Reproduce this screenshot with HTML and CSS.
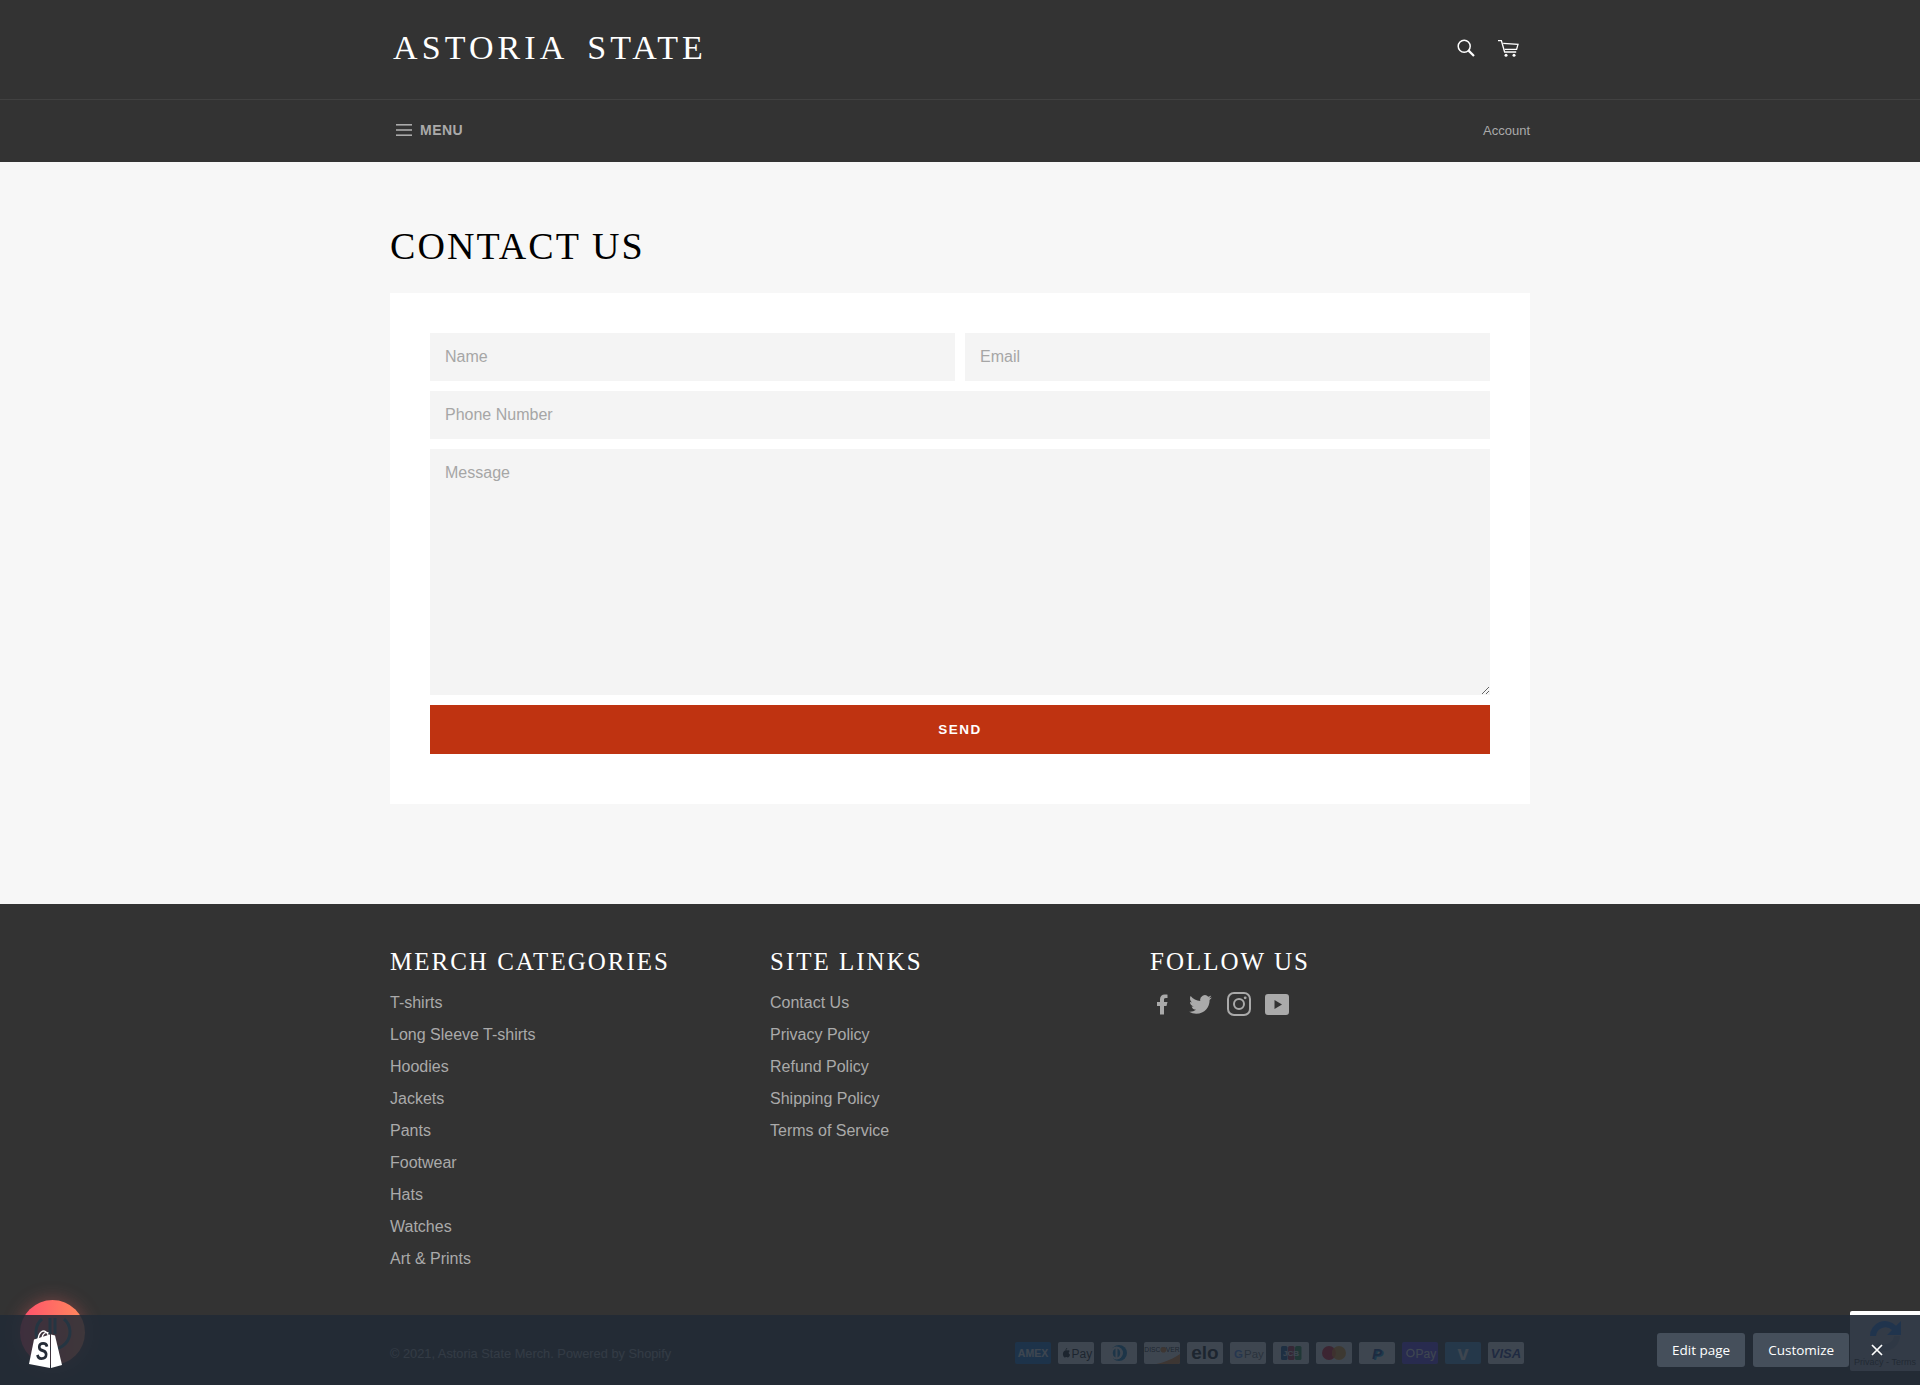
FILE: index.html
```html
<!DOCTYPE html>
<html lang="en">
<head>
  <meta charset="UTF-8">
  <meta name="viewport" content="width=device-width, initial-scale=1.0">
  <title>Contact Us - Astoria State Merch</title>
  <link rel="stylesheet" href="styles.css">
</head>
<body>

  <header class="site-header">
    <div class="masthead">
      <div class="wrap masthead-row">
        <a class="logo" href="#">ASTORIA STATE</a>
        <div class="header-icons">
          <a href="#" aria-label="Search">
            <svg class="icon-search" viewBox="0 0 18 18" fill="none" stroke="#fff"><circle cx="7.2" cy="7.2" r="6" stroke-width="1.5"/><path d="M11.6 11.6 17 17" stroke-width="2.2"/></svg>
          </a>
          <a href="#" aria-label="Cart">
            <svg class="icon-cart" viewBox="0 0 21 17" fill="none" stroke="#fff" stroke-width="1.3"><path d="M0 .7h3.4L6.6 12h11.6"/><path d="M5.2 3.4 20 4.4l-1.4 5H6.6"/><circle cx="8" cy="15.2" r="1.5" fill="#fff" stroke="none"/><circle cx="16" cy="15.2" r="1.5" fill="#fff" stroke="none"/></svg>
          </a>
        </div>
      </div>
    </div>
    <div class="wrap nav-row">
      <a class="menu-link" href="#">
        <svg class="icon-menu" viewBox="0 0 16 12" fill="#aaa"><rect width="16" height="1.6"/><rect y="5.2" width="16" height="1.6"/><rect y="10.4" width="16" height="1.6"/></svg>
        MENU
      </a>
      <a class="account-link" href="#">Account</a>
    </div>
  </header>

  <main class="wrap page-main">
    <h1 class="page-title">CONTACT US</h1>
    <form class="contact-card">
      <div class="field-row">
        <input type="text" placeholder="Name">
        <input type="email" placeholder="Email">
      </div>
      <input type="tel" placeholder="Phone Number">
      <textarea placeholder="Message"></textarea>
      <button type="button">SEND</button>
    </form>
  </main>

  <footer class="site-footer">
    <div class="wrap footer-cols">
      <div>
        <h4>MERCH CATEGORIES</h4>
        <ul>
          <li><a href="#">T-shirts</a></li>
          <li><a href="#">Long Sleeve T-shirts</a></li>
          <li><a href="#">Hoodies</a></li>
          <li><a href="#">Jackets</a></li>
          <li><a href="#">Pants</a></li>
          <li><a href="#">Footwear</a></li>
          <li><a href="#">Hats</a></li>
          <li><a href="#">Watches</a></li>
          <li><a href="#">Art &amp; Prints</a></li>
        </ul>
      </div>
      <div>
        <h4>SITE LINKS</h4>
        <ul>
          <li><a href="#">Contact Us</a></li>
          <li><a href="#">Privacy Policy</a></li>
          <li><a href="#">Refund Policy</a></li>
          <li><a href="#">Shipping Policy</a></li>
          <li><a href="#">Terms of Service</a></li>
        </ul>
      </div>
      <div>
        <h4>FOLLOW US</h4>
        <div class="social">
          <svg class="soc-f" viewBox="7 2 11 20" fill="#aaa"><path d="M14 13.5h2.5l1-4H14v-2c0-1.03 0-2 2-2h1.5V2.14c-.326-.043-1.557-.14-2.857-.14C11.928 2 10 3.657 10 6.7v2.8H7v4h3V22h4v-8.5z"/></svg>
          <svg class="soc-t" viewBox="0 2 24 20" fill="#aaa"><path d="M23.953 4.57a10 10 0 01-2.825.775 4.958 4.958 0 002.163-2.723c-.951.555-2.005.959-3.127 1.184a4.92 4.92 0 00-8.384 4.482C7.69 8.095 4.067 6.13 1.64 3.162a4.822 4.822 0 00-.666 2.475c0 1.71.87 3.213 2.188 4.096a4.904 4.904 0 01-2.228-.616v.06a4.923 4.923 0 003.946 4.827 4.996 4.996 0 01-2.212.085 4.936 4.936 0 004.604 3.417 9.867 9.867 0 01-6.102 2.105c-.39 0-.779-.023-1.17-.067a13.995 13.995 0 007.557 2.209c9.053 0 13.998-7.496 13.998-13.985 0-.21 0-.42-.015-.63A9.935 9.935 0 0024 4.59z"/></svg>
          <svg class="soc-i" viewBox="0 0 24 24" fill="none" stroke="#aaa" stroke-width="2"><rect x="1" y="1" width="22" height="22" rx="6"/><circle cx="12" cy="12" r="5"/><circle cx="18.2" cy="5.8" r="1.4" fill="#aaa" stroke="none"/></svg>
          <svg class="soc-y" viewBox="0 0 24 21" fill="#aaa"><path fill-rule="evenodd" d="M3 0h18a3 3 0 0 1 3 3v15a3 3 0 0 1-3 3H3a3 3 0 0 1-3-3V3a3 3 0 0 1 3-3zm6.500 6v9l7.500-4.500z"/></svg>
        </div>
      </div>
    </div>
    <div class="wrap footer-bottom">
      <p class="copyright">© 2021, Astoria State Merch. Powered by Shopify</p>
      <div class="payments">
        <svg viewBox="0 0 36 22"><rect width="36" height="22" rx="2" fill="#016fd0"/><text x="18" y="15" text-anchor="middle" class="pay-t" font-size="10.500" font-weight="700" fill="#fff">AMEX</text></svg>
        <svg viewBox="0 0 36 22"><rect width="36" height="22" rx="2" fill="#fff"/><path d="M7 8.600c1-.6 1.800-.3 2.300 0 .5-.3 1.500-.7 2.500.3-1.700 1-1.300 3.200.3 3.800-.5 1.300-1.300 2.800-2.300 2.800-.6 0-.9-.4-1.500-.4s-.9.4-1.500.4C5 15.500 3.600 10 7 8.600zM9.300 6c0 1-.8 1.900-1.800 1.900 0-1 .8-1.900 1.800-1.900z" fill="#000"/><text x="13.500" y="15.500" class="pay-t" font-size="12" fill="#000">Pay</text></svg>
        <svg viewBox="0 0 36 22"><rect width="36" height="22" rx="2" fill="#fff"/><circle cx="18" cy="11" r="8" fill="#0079be"/><circle cx="15.500" cy="11" r="6.500" fill="#fff"/><path d="M14.500 6.500v9a5 5 0 0 1 0-9z" fill="#0079be"/><path d="M16.500 6.500v9a5 5 0 0 0 0-9z" fill="#0079be"/></svg>
        <svg viewBox="0 0 36 22"><rect width="36" height="22" rx="2" fill="#fff"/><path d="M12 22c10-2 18-6 24-10v8a2 2 0 0 1-2 2z" fill="#f48120"/><text x="18" y="10" text-anchor="middle" class="pay-t" font-size="6.800" fill="#000">DISCOVER</text><circle cx="19.500" cy="7.800" r="2.800" fill="#f48120"/></svg>
        <svg viewBox="0 0 36 22"><rect width="36" height="22" rx="2" fill="#fff"/><text x="18" y="17" text-anchor="middle" class="pay-t" font-size="19" font-weight="700" fill="#000">elo</text></svg>
        <svg viewBox="0 0 36 22"><rect width="36" height="22" rx="2" fill="#fff"/><text x="4" y="15.500" class="pay-t" font-size="11.500" font-weight="700" fill="#4285f4">G</text><text x="14" y="15.500" class="pay-t" font-size="11.500" fill="#5f6368">Pay</text></svg>
        <svg viewBox="0 0 36 22"><rect width="36" height="22" rx="2" fill="#fff"/><rect x="8" y="4" width="6.500" height="14" rx="1.500" fill="#0e4c96"/><rect x="15" y="4" width="6.500" height="14" rx="1.500" fill="#b81c3a"/><rect x="22" y="4" width="6.500" height="14" rx="1.500" fill="#1a8f3c"/><text x="18" y="14" text-anchor="middle" class="pay-t jcb" font-size="8" font-weight="700" fill="#fff">JCB</text></svg>
        <svg viewBox="0 0 36 22"><rect width="36" height="22" rx="2" fill="#fff"/><circle cx="13" cy="11" r="7" fill="#eb001b"/><circle cx="23" cy="11" r="7" fill="#f79e1b"/><path d="M18 6.100a7 7 0 0 1 0 9.800 7 7 0 0 1 0-9.800z" fill="#ff5f00"/></svg>
        <svg viewBox="0 0 36 22"><rect width="36" height="22" rx="2" fill="#fff"/><text x="19.500" y="18" text-anchor="middle" class="pay-t" font-size="15" font-weight="700" font-style="italic" fill="#009cde">P</text><text x="18" y="17" text-anchor="middle" class="pay-t" font-size="15" font-weight="700" font-style="italic" fill="#003087">P</text></svg>
        <svg viewBox="0 0 36 22"><rect width="36" height="22" rx="2" fill="#5a31f4"/><circle cx="8.500" cy="11" r="3.600" fill="none" stroke="#fff" stroke-width="1.400"/><text x="13.500" y="15.500" class="pay-t" font-size="12" fill="#fff">Pay</text></svg>
        <svg viewBox="0 0 36 22"><rect width="36" height="22" rx="2" fill="#3d95ce"/><text x="18" y="18" text-anchor="middle" class="pay-t" font-size="20" font-weight="700" fill="#fff">v</text></svg>
        <svg viewBox="0 0 36 22"><rect width="36" height="22" rx="2" fill="#fff"/><text x="18" y="16" text-anchor="middle" class="pay-t" font-size="13" font-weight="700" font-style="italic" fill="#142688">VISA</text></svg>
      </div>
    </div>
  </footer>

  <div class="shop-bubble">
    <svg viewBox="0 0 65 65" fill="none" stroke="#3f7f92" stroke-width="3"><path d="M22 19a17 17 0 1 0 22 0"/><path d="M30 18v16M35 18v16"/></svg>
  </div>

  <div class="captcha-badge">
    <svg viewBox="0 0 36 36"><path fill-rule="evenodd" d="M3 18A15 15 0 0 1 29 7.800L34 3v14H20l5-5A9.500 9.500 0 0 0 9 18z" fill="#1a73e8"/><path d="M33 18a15 15 0 0 1-26 10l4.500-4A9.500 9.500 0 0 0 27 18z" fill="#8a94a6"/></svg>
    <span>Privacy - Terms</span>
  </div>

  <div class="admin-bar">
    <svg class="shop-logo" viewBox="0 0 33 38"><path d="M0 34 5 9.500 21 4.500V38z" fill="#fff"/><path d="M22 4.500 26 5.500 33 35 22 38z" fill="#fff"/><path d="M9 9C10 2 14 0 16.500 1.500 19 3 19.500 6 19.500 8M13 8C14 3 17 1.500 19.500 3" fill="none" stroke="#fff" stroke-width="1.300"/><text class="bag-s" transform="translate(7 30) scale(.72 1)" font-size="26" font-weight="700" font-style="italic" fill="#252c37">S</text></svg>
    <div class="admin-actions">
      <a class="admin-btn" href="#">Edit page</a>
      <a class="admin-btn" href="#">Customize</a>
      <svg class="admin-close" viewBox="0 0 12 12" stroke="#fff" stroke-width="1.700"><path d="M1 1l10 10M11 1 1 11"/></svg>
    </div>
  </div>

</body>
</html>
```

FILE: styles.css
```css
* {
  box-sizing: border-box;
}

html, body {
  margin: 0;
  height: 100%;
}

body {
  min-height: 1385px;
  display: flex;
  flex-direction: column;
  font-family: "Liberation Sans", Arial, sans-serif;
  font-size: 16px;
  color: #aaa;
  background-color: #f7f7f7;
  overflow: hidden;
}

a {
  color: inherit;
  text-decoration: none;
}

.wrap {
  width: 1140px;
  margin: 0 auto;
}

/* header */
.site-header {
  background-color: #333;
}

.masthead {
  height: 100px;
  border-bottom: 1px solid #414141;
}

.masthead-row {
  height: 96px;
  display: flex;
  align-items: center;
  justify-content: space-between;
}

.logo {
  font-family: "Liberation Serif", serif;
  font-size: 34px;
  letter-spacing: 4.1px;
  word-spacing: 8px;
  color: #fff;
  padding-left: 3px;
}

.header-icons {
  display: flex;
  align-items: center;
  gap: 23px;
  padding-right: 11px;
}

.header-icons a {
  display: flex;
}

.icon-search {
  width: 18px;
  height: 18px;
}

.icon-cart {
  width: 21px;
  height: 17px;
}

.nav-row {
  height: 62px;
  display: flex;
  align-items: center;
  justify-content: space-between;
  padding-bottom: 1px;
}

.menu-link {
  display: flex;
  align-items: center;
  gap: 8px;
  padding-left: 6px;
  margin-bottom: 2px;
  font-size: 14px;
  font-weight: 700;
  letter-spacing: 0.5px;
}

.icon-menu {
  width: 16px;
  height: 12px;
}

.account-link {
  font-size: 13px;
}

/* contact form */
.page-main {
  padding-bottom: 100px;
}

.page-title {
  margin: 0;
  padding: 63px 0 25px;
  font-family: "Liberation Serif", serif;
  font-size: 38px;
  line-height: 43px;
  font-weight: 400;
  letter-spacing: 2.1px;
  color: #000;
}

.contact-card {
  display: flex;
  flex-direction: column;
  gap: 10px;
  padding: 40px 40px 50px;
  background-color: #fff;
  height: 511px;
}

.field-row {
  display: flex;
  gap: 10px;
}

.field-row input {
  flex: 1;
  min-width: 0;
}

input, textarea {
  height: 48px;
  padding: 15px;
  border: 0;
  border-radius: 0;
  outline: 0;
  background-color: #f4f4f4;
  font-family: "Liberation Sans", Arial, sans-serif;
  font-size: 16px;
  line-height: 18px;
}

input {
  padding: 0 15px 1px;
}

textarea {
  height: 246px;
  resize: vertical;
}

input::placeholder, textarea::placeholder {
  color: #a6a6a6;
}

button {
  height: 49px;
  border: 0;
  background-color: #bf3311;
  color: #fff;
  font-family: "Liberation Sans", Arial, sans-serif;
  font-size: 13.5px;
  font-weight: 700;
  letter-spacing: 1.5px;
}

/* footer */
.site-footer {
  flex: 1;
  background-color: #333;
  padding-top: 44px;
}

.footer-cols {
  display: grid;
  grid-template-columns: 380px 380px 380px;
  height: 371px;
}

.site-footer h4 {
  margin: 0 0 12px;
  font-family: "Liberation Serif", serif;
  font-size: 25px;
  line-height: 27px;
  font-weight: 400;
  letter-spacing: 2px;
  color: #fff;
}

.site-footer ul {
  margin: 0;
  padding: 0;
  list-style: none;
}

.site-footer li {
  height: 32px;
  line-height: 32px;
}

.social {
  display: flex;
  align-items: center;
  height: 24px;
  margin-top: 17px;
}

.soc-f {
  width: 11px;
  height: 21px;
  margin-left: 7px;
}

.soc-t {
  width: 23px;
  height: 19px;
  margin-left: 21px;
}

.soc-i {
  width: 24px;
  height: 24px;
  margin-left: 15px;
}

.soc-y {
  width: 24px;
  height: 21px;
  margin-left: 14px;
}

.footer-bottom {
  display: flex;
  align-items: center;
  justify-content: space-between;
  height: 22px;
  margin-top: 23px;
}

.copyright {
  margin: 0;
  font-size: 12.8px;
}

.payments {
  display: flex;
  gap: 7px;
  padding-right: 6px;
}

.payments svg {
  width: 36px;
  height: 22px;
}

.pay-t {
  font-family: "Liberation Sans", Arial, sans-serif;
}

/* things lying over the page */
.shop-bubble {
  position: fixed;
  left: 20px;
  top: 1300px;
  width: 65px;
  height: 65px;
  border-radius: 50%;
  background: linear-gradient(90deg, #ff4f6c, #ff8a5c);
  box-shadow: 0 0 18px rgba(255, 100, 100, 0.35);
}

.shop-bubble svg {
  display: block;
}

.captcha-badge {
  position: fixed;
  left: 1850px;
  top: 1311px;
  width: 70px;
  height: 60px;
  padding-top: 3px;
  background-color: #aaaab8;
  border-top: 4px solid #fff;
  border-radius: 2px 0 0 2px;
  display: flex;
  flex-direction: column;
  align-items: center;
  color: #222;
  font-size: 9px;
  white-space: nowrap;
}

.captcha-badge svg {
  width: 36px;
  height: 36px;
  flex: none;
  margin-bottom: 3px;
}

.admin-bar {
  position: fixed;
  left: 0;
  right: 0;
  bottom: 0;
  height: 70px;
  display: flex;
  align-items: center;
  justify-content: space-between;
  background-color: rgba(33, 43, 54, 0.87);
}

.shop-logo {
  position: absolute;
  left: 29px;
  top: 15px;
  width: 33px;
  height: 38px;
}

.bag-s {
  font-family: "Liberation Sans", Arial, sans-serif;
}

.admin-actions {
  position: absolute;
  left: 1657px;
  top: 18px;
  display: flex;
  align-items: center;
  gap: 8px;
}

.admin-btn {
  height: 34px;
  padding: 0 15px;
  display: flex;
  align-items: center;
  border-radius: 3px;
  background-color: #454f5b;
  color: #fff;
  font-family: "Open Sans", sans-serif;
  font-size: 13.5px;
}

.admin-close {
  width: 12px;
  height: 12px;
  margin-left: 14px;
}
```
